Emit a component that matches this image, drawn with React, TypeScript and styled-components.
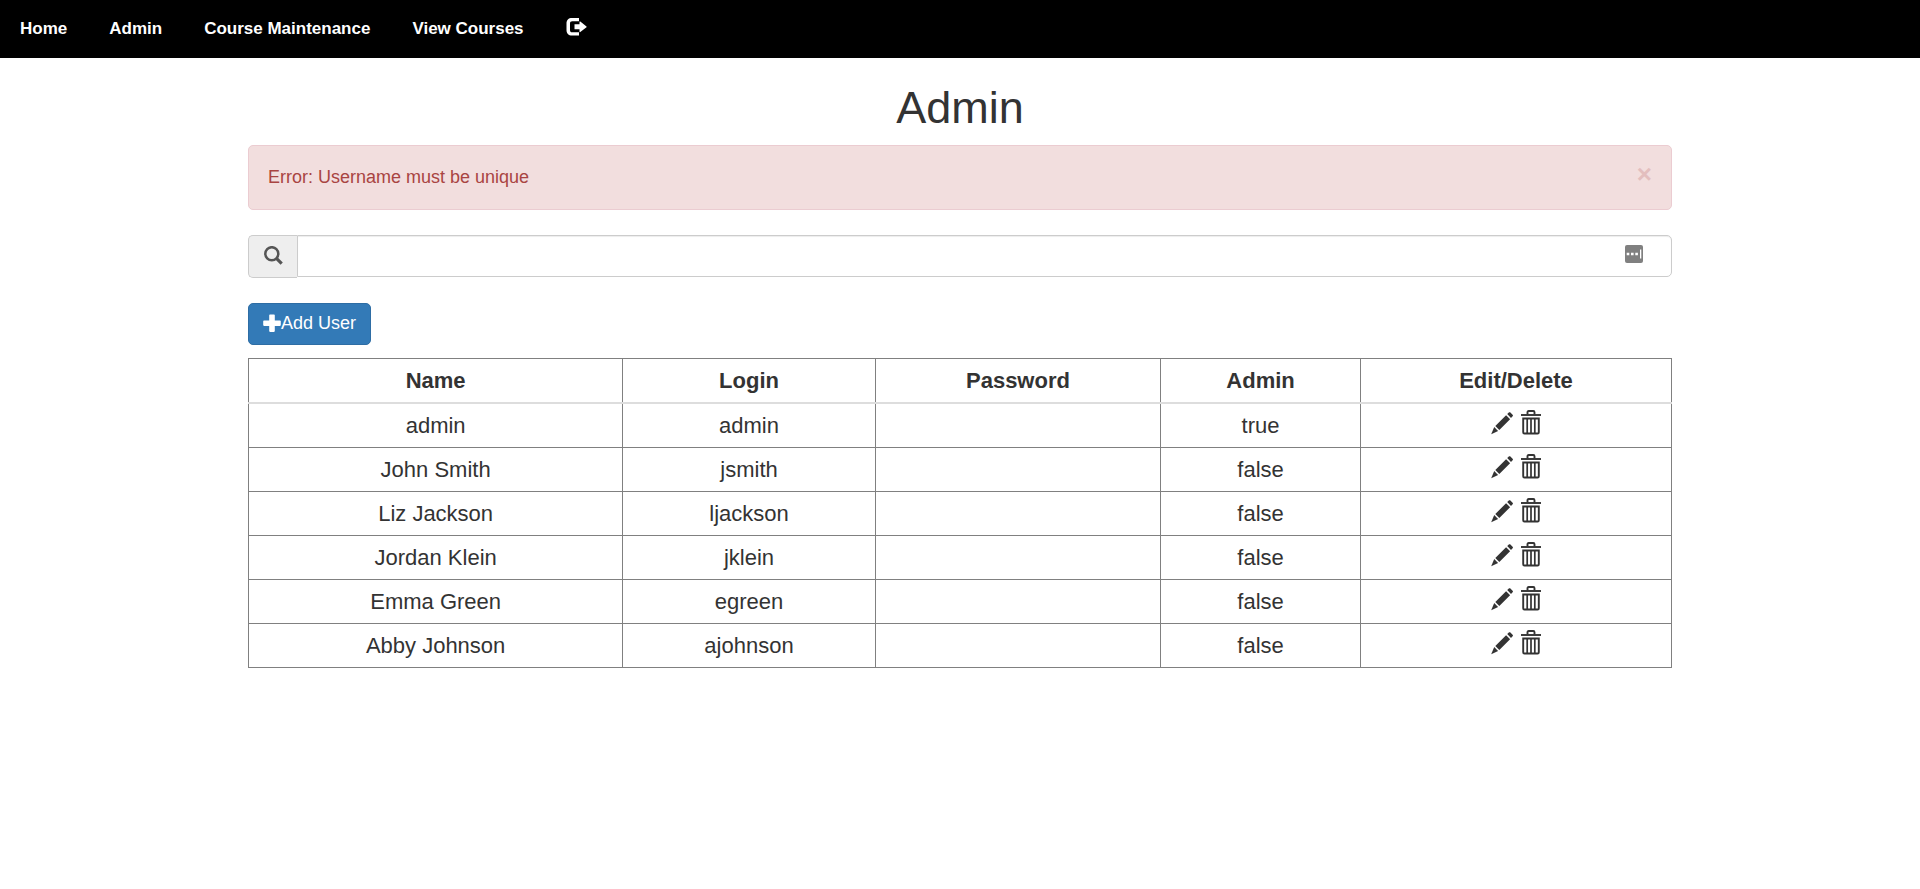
import React from "react";
import styled, { createGlobalStyle } from "styled-components";

const GlobalStyle = createGlobalStyle`
  *, *::before, *::after { box-sizing: border-box; }
  body {
    margin: 0;
    background: #fff;
    color: #333;
    font-family: "Liberation Sans", Arial, Helvetica, sans-serif;
    font-size: 18px;
    line-height: 25px;
  }
`;

const NavBar = styled.nav`
  display: flex;
  align-items: flex-start;
  gap: 42px;
  height: 58px;
  padding: 16px 20px;
  background: #000;
`;

const NavLink = styled.a`
  color: #fff;
  font-size: 17px;
  font-weight: bold;
  text-decoration: none;
`;

const Container = styled.main`
  width: calc(100% - 40px);
  max-width: 1424px;
  margin: 0 auto;
  padding-top: 25px;
`;

const Title = styled.h1`
  margin: 0 0 12px;
  font-size: 45px;
  font-weight: 500;
  line-height: 50px;
  text-align: center;
`;

const Alert = styled.div`
  display: flex;
  align-items: flex-start;
  justify-content: space-between;
  margin-bottom: 25px;
  padding: 19px;
  border: 1px solid #ebccd1;
  border-radius: 5px;
  background: #f2dede;
  color: #a94442;
`;

const CloseButton = styled.button`
  padding: 0;
  border: 0;
  background: none;
  color: inherit;
  font: bold 26px/18px "Liberation Sans", Arial, sans-serif;
  opacity: 0.2;
  cursor: pointer;
`;

const SearchGroup = styled.div`
  position: relative;
  display: flex;
  align-items: flex-start;
  margin-bottom: 25px;
`;

const SearchLabel = styled.label`
  display: flex;
  justify-content: center;
  width: 49px;
  height: 43px;
  padding-top: 10px;
  border: 1px solid #ccc;
  border-right: 0;
  border-radius: 5px 0 0 5px;
  background: #eee;
  color: #555;
`;

const SearchInput = styled.input`
  flex: 1;
  min-width: 0;
  height: 42px;
  padding: 8px 60px 8px 15px;
  border: 1px solid #ccc;
  border-radius: 0 5px 5px 0;
  background: #fff;
  box-shadow: inset 0 1px 1px rgba(0, 0, 0, 0.075);
  color: #555;
  font: inherit;
`;

const FillBadge = styled.svg`
  position: absolute;
  top: 10px;
  right: 29px;
`;

const AddButton = styled.button`
  display: flex;
  align-items: center;
  height: 42px;
  margin-bottom: 13px;
  padding: 0 14px 2px;
  border: 1px solid #2e6da4;
  border-radius: 5px;
  background: #337ab7;
  color: #fff;
  font: 18px/25px "Liberation Sans", Arial, sans-serif;
  cursor: pointer;
`;

const UserTable = styled.table`
  width: 100%;
  border-collapse: collapse;
  table-layout: fixed;
  font-size: 22px;
  line-height: 31px;
  text-align: center;
`;

const HeadCell = styled.th<{ $share: number }>`
  width: ${(p) => p.$share}%;
  padding: 6px;
  border: 1px solid #808080;
  border-bottom: 2px solid #ddd;
`;

const Cell = styled.td`
  height: 44px;
  padding: 6px;
  border: 1px solid #808080;
`;

const Actions = styled.div`
  display: flex;
  justify-content: center;
  gap: 8px;
  height: 31px;
`;

const IconButton = styled.button`
  display: flex;
  padding: 0;
  border: 0;
  background: none;
  color: inherit;
  cursor: pointer;
`;

const LogOutIcon = () => (
  <svg width="21" height="22" viewBox="0 0 21 22" fill="currentColor" aria-hidden="true">
    <path d="M13 2H6C2.500 2 .500 4 .500 7.500v6.500c0 3.500 2 5.500 5.500 5.500h7V16.300H6.300c-1.700 0-2.300-.7-2.300-2.300V7.500c0-1.600.7-2.300 2.300-2.300H13z" />
    <path d="M8.500 8.300h5V5.900c0-.5.4-.6.8-.3l6.200 4.800c.3.300.3.600 0 .9l-6.200 4.800c-.4.300-.8.200-.8-.3v-2.500h-5z" />
  </svg>
);

const SearchIcon = () => (
  <svg width="19" height="19" viewBox="0 0 19 19" fill="none" stroke="currentColor" aria-hidden="true">
    <circle cx="7.800" cy="7.700" r="6.500" strokeWidth="2.500" />
    <path d="M12.200 12.200l5.500 5.500" strokeWidth="3.200" />
  </svg>
);

const PlusIcon = () => (
  <svg width="18" height="18" viewBox="0 0 18 18" fill="currentColor" aria-hidden="true">
    <path d="M7 .5h4c.5 0 .8.3.8.8v5.200h5.200c.5 0 .8.300.8.800v3.800c0 .5-.3.800-.8.800h-5.200v5.200c0 .5-.3.800-.8.800H7c-.5 0-.8-.3-.8-.8v-5.200H1c-.5 0-.8-.3-.8-.8V7.300c0-.5.3-.8.8-.8h5.200V1.300c0-.5.3-.8.800-.8z" />
  </svg>
);

const PencilIcon = () => (
  <svg width="22" height="25" viewBox="0 0 22 25" fill="currentColor" aria-hidden="true">
    <path d="M16.200 4.100l1.600-1.600c.5-.5 1.100-.5 1.600 0l2.200 2.200c.5.500.5 1.100 0 1.600L20 7.900z" />
    <path d="M15.100 5.200l4 4L8.300 20l-4-4z" />
    <path d="M3.200 17.100l3.900 3.900L.2 24.200z" />
  </svg>
);

const TrashIcon = () => (
  <svg width="20" height="25" viewBox="0 0 20 25" fill="none" stroke="currentColor" aria-hidden="true">
    <path d="M6.500 4.500V2.300c0-.8.4-1.300 1.200-1.300h4.600c.8 0 1.200.5 1.200 1.300v2.200" strokeWidth="1.900" />
    <path d="M0 5h20" strokeWidth="1.900" />
    <path d="M2.200 8.500v13.700c0 .8.400 1.300 1.200 1.300h13.200c.8 0 1.200-.5 1.200-1.300V8.500z" strokeWidth="1.900" />
    <path d="M6.200 8v15M10 8v15M13.800 8v15" strokeWidth="1.700" />
  </svg>
);

const navItems = ["Home", "Admin", "Course Maintenance", "View Courses"];

const columns = [
  { label: "Name", share: 26.3 },
  { label: "Login", share: 17.75 },
  { label: "Password", share: 20.05 },
  { label: "Admin", share: 14.05 },
  { label: "Edit/Delete", share: 21.85 },
];

const users = [
  { name: "admin", login: "admin", admin: true },
  { name: "John Smith", login: "jsmith", admin: false },
  { name: "Liz Jackson", login: "ljackson", admin: false },
  { name: "Jordan Klein", login: "jklein", admin: false },
  { name: "Emma Green", login: "egreen", admin: false },
  { name: "Abby Johnson", login: "ajohnson", admin: false },
];

export default function App() {
  return (
    <>
      <GlobalStyle />
      <NavBar>
        {navItems.map((item) => (
          <NavLink key={item} href="#">
            {item}
          </NavLink>
        ))}
        <NavLink href="#" aria-label="Log out">
          <LogOutIcon />
        </NavLink>
      </NavBar>
      <Container>
        <Title>Admin</Title>
        <Alert role="alert">
          <span>Error: Username must be unique</span>
          <CloseButton type="button" aria-label="Close">×</CloseButton>
        </Alert>
        <SearchGroup>
          <SearchLabel htmlFor="user-search" aria-label="Search">
            <SearchIcon />
          </SearchLabel>
          <SearchInput id="user-search" type="text" />
          <FillBadge width="18" height="18" viewBox="0 0 18 18" aria-hidden="true">
            <rect width="18" height="18" rx="2" fill="#808080" />
            <path d="M1.700 7.700h2.600v2.600H1.700zM6 7.700h2.600v2.600H6zM10.300 7.700h2.600v2.600h-2.600zM15 4.500h1.300v9H15z" fill="#fff" />
          </FillBadge>
        </SearchGroup>
        <AddButton type="button">
          <PlusIcon />
          Add User
        </AddButton>
        <UserTable>
          <thead>
            <tr>
              {columns.map((column) => (
                <HeadCell key={column.label} $share={column.share} scope="col">
                  {column.label}
                </HeadCell>
              ))}
            </tr>
          </thead>
          <tbody>
            {users.map((user) => (
              <tr key={user.login}>
                <Cell>{user.name}</Cell>
                <Cell>{user.login}</Cell>
                <Cell />
                <Cell>{String(user.admin)}</Cell>
                <Cell>
                  <Actions>
                    <IconButton type="button" aria-label={`Edit ${user.name}`}>
                      <PencilIcon />
                    </IconButton>
                    <IconButton type="button" aria-label={`Delete ${user.name}`}>
                      <TrashIcon />
                    </IconButton>
                  </Actions>
                </Cell>
              </tr>
            ))}
          </tbody>
        </UserTable>
      </Container>
    </>
  );
}
